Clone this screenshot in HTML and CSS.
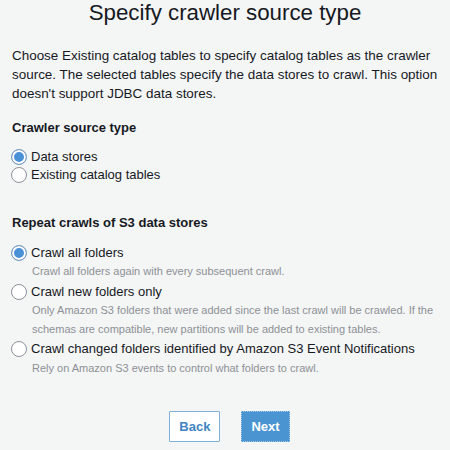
FILE: index.html
```html
<!DOCTYPE html>
<html>
<head>
<meta charset="utf-8">
<link rel="stylesheet" href="styles.css">
</head>
<body>
<div class="page">
  <h1 class="title">Specify crawler source type</h1>
  <p class="intro">Choose Existing catalog tables to specify catalog tables as the crawler source. The selected tables specify the data stores to crawl. This option doesn't support JDBC data stores.</p>

  <h2 class="section">Crawler source type</h2>
  <div class="options">
    <label class="opt"><span class="radio checked"></span><span class="label">Data stores</span></label>
    <label class="opt"><span class="radio"></span><span class="label">Existing catalog tables</span></label>
  </div>

  <h2 class="section second">Repeat crawls of S3 data stores</h2>
  <div class="options">
    <div class="opt-block">
      <label class="opt"><span class="radio checked"></span><span class="label">Crawl all folders</span></label>
      <p class="desc">Crawl all folders again with every subsequent crawl.</p>
    </div>
    <div class="opt-block">
      <label class="opt"><span class="radio"></span><span class="label">Crawl new folders only</span></label>
      <p class="desc">Only Amazon S3 folders that were added since the last crawl will be crawled. If the schemas are compatible, new partitions will be added to existing tables.</p>
    </div>
    <div class="opt-block">
      <label class="opt"><span class="radio"></span><span class="label">Crawl changed folders identified by Amazon S3 Event Notifications</span></label>
      <p class="desc">Rely on Amazon S3 events to control what folders to crawl.</p>
    </div>
  </div>

  <div class="actions">
    <button class="btn back">Back</button>
    <button class="btn next">Next</button>
  </div>
</div>
</body>
</html>
```

FILE: styles.css
```css
html, body {
  margin: 0;
  padding: 0;
  background: #f4f5f5;
}
body {
  font-family: "Liberation Sans", Arial, sans-serif;
  color: #16191f;
}
.page {
  padding: 0 12px;
}
.title {
  margin: 0;
  font-size: 22.3px;
  font-weight: normal;
  text-align: center;
  line-height: 26px;
}
.intro {
  margin: 20px 0 0;
  font-size: 13.45px;
  line-height: 19px;
}
.section {
  margin: 16px 0 0;
  font-size: 13px;
  font-weight: bold;
  line-height: 18px;
}
.section.second {
  margin-top: 30px;
}
.options {
  margin-top: 11px;
  display: flex;
  flex-direction: column;
}
.section.second + .options {
  margin-top: 12px;
}
.opt {
  display: flex;
  align-items: center;
  gap: 4px;
  font-size: 13px;
  line-height: 18px;
  height: 18px;
  white-space: nowrap;
}
.radio {
  width: 14px;
  height: 14px;
  border: 1px solid #8d9299;
  border-radius: 50%;
  background: #fff;
  flex: none;
  margin-left: -1px;
}
.radio.checked {
  border-color: #7d9cbc;
  background: #4a90d6;
  box-shadow: inset 0 0 0 2px #fff;
}
.label {
  display: block;
}
.desc {
  margin: 0 0 1.5px 20px;
  font-size: 11px;
  line-height: 19px;
  color: #8d9196;
}
.opt-block:last-child .desc {
  margin-top: 1px;
}
.actions {
  margin-top: 31px;
  display: flex;
  justify-content: center;
  gap: 21px;
  padding-left: 9px;
}
.btn {
  font-family: "Liberation Sans", Arial, sans-serif;
  font-size: 13px;
  font-weight: bold;
  height: 31px;
  padding: 0 9px;
  border-radius: 1px;
  cursor: pointer;
}
.btn.back {
  background: #fff;
  color: #3f84c2;
  border: 1px solid #7fb0d9;
}
.btn.next {
  background: #4a94d2;
  color: #fff;
  border: 1px dotted #a7c9e6;
  padding: 0 9px;
}
```
